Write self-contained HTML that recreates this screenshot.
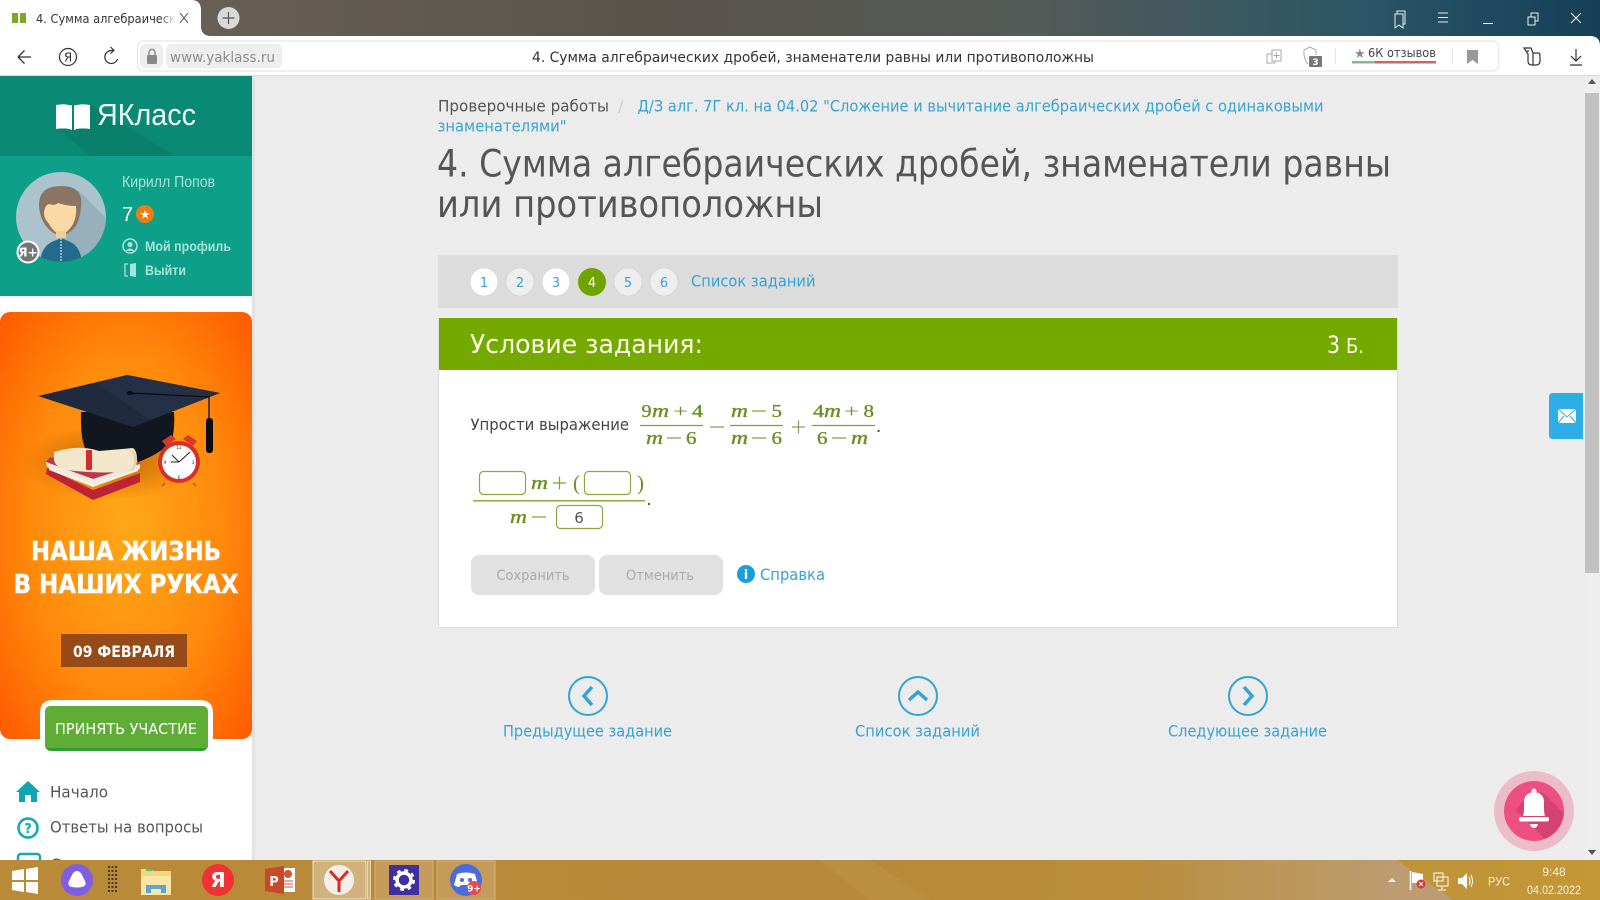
<!DOCTYPE html>
<html lang="ru"><head><meta charset="utf-8"><title>4. Сумма алгебраических дробей</title>
<style>
html,body{margin:0;padding:0;width:1600px;height:900px;overflow:hidden;background:#ececec}
svg{display:block;position:absolute;left:0;top:0}
text{font-family:"DejaVu Sans","Liberation Sans",sans-serif}
.r{font-family:"Liberation Sans","DejaVu Sans",sans-serif}
.mt{font-family:"Liberation Serif",serif;font-size:18px;fill:#6b8f22;stroke:#6b8f22;stroke-width:.35}
.mi{font-family:"Liberation Serif",serif;font-size:19px;font-style:italic;fill:#6b8f22;stroke:#6b8f22;stroke-width:.35}
.l{fill:#37a3d3;font-size:16px}
.n{fill:#3ba2d6;font-size:13px;text-anchor:middle}
</style></head><body>
<svg width="1600" height="900" viewBox="0 0 1600 900" xmlns="http://www.w3.org/2000/svg">
<defs>
<linearGradient id="top" x1="0" x2="1" y1="0" y2="0"><stop offset="0" stop-color="#6e645b"/><stop offset=".4" stop-color="#5a544c"/><stop offset=".65" stop-color="#545a58"/><stop offset=".85" stop-color="#2b5666"/><stop offset="1" stop-color="#153f58"/></linearGradient>
<radialGradient id="ban" gradientUnits="userSpaceOnUse" cx="126" cy="530" r="175" gradientTransform="translate(0 -400) scale(1 1.75)"><stop offset="0" stop-color="#ffa818"/><stop offset=".55" stop-color="#ff8a0c"/><stop offset="1" stop-color="#ff5a00"/></radialGradient>
<linearGradient id="tb" x1="0" x2="1" y1="0" y2="0"><stop offset="0" stop-color="#b98a38"/><stop offset=".55" stop-color="#b8893a"/><stop offset=".8" stop-color="#bb8f3c"/><stop offset="1" stop-color="#c49834"/></linearGradient>
<linearGradient id="wedge" gradientUnits="userSpaceOnUse" x1="1130" x2="1390" y1="0" y2="0"><stop offset="0" stop-color="#bc9c70" stop-opacity="0"/><stop offset="1" stop-color="#bc9c70"/></linearGradient>
<linearGradient id="fade" x1="0" x2="1" y1="0" y2="0"><stop offset="0" stop-color="#fff" stop-opacity="0"/><stop offset="1" stop-color="#fff"/></linearGradient>
<radialGradient id="hs" cx=".5" cy=".5" r=".5"><stop offset="0" stop-color="#a84c00" stop-opacity=".7"/><stop offset="1" stop-color="#a84c00" stop-opacity="0"/></radialGradient>
<clipPath id="av"><circle cx="61" cy="217" r="45"/></clipPath>
<clipPath id="bell"><circle cx="1534" cy="811" r="30"/></clipPath>
</defs>

<!-- main background -->
<rect width="1600" height="900" fill="#ececec"/>

<!-- browser chrome -->
<rect width="1600" height="38" fill="url(#top)"/>
<rect y="36" width="1600" height="40" fill="#fff"/>
<path d="M1590 36q10 0 10 10V36z" fill="#153f58"/>
<rect y="75" width="1600" height="1" fill="#dcdcdc"/>
<path d="M0 36V0h191q10 0 10 10v16q0 10 10 10z" fill="#fff"/>
<rect x="12" y="13" width="6" height="10" fill="#7aa928"/><rect x="20" y="13" width="6" height="10" fill="#7aa928"/>
<text x="36" y="23" font-size="12.500" fill="#333" textLength="140" lengthAdjust="spacingAndGlyphs">4. Сумма алгебраическ</text>
<rect x="160" y="10" width="16" height="16" fill="url(#fade)"/>
<path d="M180 13l8 10M188 13l-8 10" stroke="#444" stroke-width="1" fill="none"/>
<circle cx="228.500" cy="18" r="11" fill="#d9d9d9"/><path d="M228.500 12v12M222.500 18h12" stroke="#555" stroke-width="1.200"/>
<!-- window controls -->
<g stroke="#e8eef0" stroke-width="1" fill="none">
<path d="M1395 14h8v14l-4-3-4 3zM1397 14v-3h8v13h-2"/>
<path d="M1438 13h10M1438 17.500h10M1438 22h10"/>
<path d="M1483 23.500h10"/>
<path d="M1528 17h7v8h-7zM1531 17v-4h7v8h-3"/>
<path d="M1571 13l10 10M1581 13l-10 10" stroke-width="1.100"/>
</g>
<!-- toolbar -->
<path d="M31 57H18M18 57l6.500-6.500M18 57l6.500 6.500" stroke="#333" stroke-width="1.300" fill="none"/>
<circle cx="68" cy="57" r="8.500" fill="none" stroke="#333" stroke-width="1.200"/>
<text x="68" y="61.500" font-size="12" fill="#333" text-anchor="middle">Я</text>
<path d="M117.500 59a6.500 6.500 0 1 1-6-8.500h2M110.500 47l3.500 3.300-3.500 3.300" stroke="#333" stroke-width="1.200" fill="none"/>
<rect x="137.500" y="41" width="1361" height="30" rx="6" fill="#fff" stroke="#e6e6e6" stroke-width="1.200"/>
<rect x="140" y="44" width="23" height="24" rx="5" fill="#eeeeee"/>
<rect x="166" y="44" width="116" height="24" rx="5" fill="#eeeeee"/>
<rect x="147" y="55" width="10" height="9" rx="1" fill="#888"/><path d="M149 55v-2.500a3 3 0 0 1 6 0V55" stroke="#888" stroke-width="1.400" fill="none"/>
<text x="170" y="62" font-size="14.500" fill="#8d8d8d" textLength="105" lengthAdjust="spacingAndGlyphs">www.yaklass.ru</text>
<text x="532" y="62" font-size="14.500" fill="#333" textLength="562" lengthAdjust="spacingAndGlyphs">4. Сумма алгебраических дробей, знаменатели равны или противоположны</text>
<g stroke="#aaa" stroke-width="1" fill="none">
<path d="M1272 50h9v11h-9zM1272 54h-5v9h8v-2M1276.500 52.500v6M1273.500 55.500h6"/>
<path d="M1310 47l-6 3v5q1 6 4 9"/>
<path d="M1310 47l6 3v5"/>
<path d="M1335.500 48v16M1452.500 48v16" stroke="#e5e5e5"/>
</g>
<rect x="1309" y="56" width="13" height="11" rx="1" fill="#777"/><text x="1315.500" y="65" font-size="9" font-weight="bold" fill="#fff" text-anchor="middle">3</text>
<text x="1354" y="58" font-size="13" fill="#888">★</text>
<text x="1368" y="57" font-size="12.500" fill="#444" textLength="68" lengthAdjust="spacingAndGlyphs">6К отзывов</text>
<rect x="1352" y="61" width="23" height="2.500" fill="#84bd84"/><rect x="1375" y="61" width="61" height="2.500" fill="#d9605c"/>
<path d="M1467 50h11v14l-5.500-4-5.500 4z" fill="#999"/>
<path d="M1524 48h7l2 5h5q2 0 2 2v6q0 4-4 4h-4q-4 0-4-4v-7zM1533 53v12M1527 51h2" stroke="#333" stroke-width="1.200" fill="none"/>
<path d="M1576 49v12M1571 56l5 5 5-5M1570 65h12" stroke="#333" stroke-width="1.200" fill="none"/>

<!-- sidebar -->
<rect x="0" y="76" width="252" height="784" fill="#fff"/>
<rect x="252" y="76" width="3" height="784" fill="#e2e2e2"/>
<rect x="0" y="76" width="252" height="80" fill="#0a8a74"/>
<path d="M60 130L90 104 176 156H90z" fill="#087a67" opacity=".6"/>
<rect x="0" y="156" width="252" height="140" fill="#0d9f87"/>
<path d="M56 105q9-2 16 1v24q-7-3-16-1zM90 105q-9-2-16 1v24q7-3 16-1z" fill="#fff"/>
<path d="M56 105h15.500v23.500H56zM74.500 105H90v23.500H74.500z" fill="#fff"/>
<text class="r" x="97" y="125" font-size="31" fill="#fff" fill-opacity=".93" textLength="99" lengthAdjust="spacingAndGlyphs">ЯКласс</text>
<!-- avatar -->
<circle cx="61" cy="217" r="45" fill="#abc3cd"/>
<g clip-path="url(#av)">
<path d="M78 190L122 234 90 272 60 240z" fill="#97b0bb"/>
<path d="M40 266q0-20 14-25l7-3 7 3q14 5 14 25z" fill="#206b8e"/>
<path d="M61 238v26" stroke="#cfe0e6" stroke-width="1.200" stroke-dasharray="2 1"/>
<path d="M39 207q-1-21 22-21 23 0 20 21-1 12-5 19-7 9-15 9-8 0-15-9-6-8-7-19z" fill="#8a7564"/>
<path d="M44 214q0-8 5-10 6 2 9-1 9 3 18 3 1 10-3 18-6 10-12 10-6 0-12-10-5-6-5-10z" fill="#f9d9a4"/>
<rect x="56" y="231" width="10" height="7" fill="#f4cd94"/>
</g>
<circle cx="28" cy="252" r="10.500" fill="#757575" stroke="#fff" stroke-width="2"/>
<text x="28" y="256.500" font-size="12" font-weight="bold" fill="#fff" text-anchor="middle">Я+</text>
<text class="r" x="122" y="187" font-size="16" fill="#a6e4d9" textLength="93" lengthAdjust="spacingAndGlyphs">Кирилл Попов</text>
<text class="r" x="122" y="221" font-size="20" fill="#fff">7</text>
<circle cx="145" cy="214" r="9" fill="#f07d14"/><text x="145" y="218.500" font-size="12" fill="#fff" text-anchor="middle">★</text>
<circle cx="130" cy="246" r="7" fill="none" stroke="#a6e4d9" stroke-width="1.600"/><circle cx="130" cy="244.500" r="2.600" fill="#a6e4d9"/><path d="M125.500 251q4.500-5 9 0z" fill="#a6e4d9"/>
<text class="r" x="145" y="251" font-size="14" font-weight="bold" fill="#a6e4d9" textLength="86" lengthAdjust="spacingAndGlyphs">Мой профиль</text>
<path d="M128 264h-3v12h3" stroke="#a6e4d9" stroke-width="1.300" fill="none"/><path d="M130 264l6-1v14l-6-1z" fill="#a6e4d9"/>
<text class="r" x="145" y="275" font-size="14" font-weight="bold" fill="#a6e4d9" textLength="41" lengthAdjust="spacingAndGlyphs">Выйти</text>

<!-- banner -->
<rect x="0" y="312" width="252" height="427" rx="10" fill="url(#ban)"/>
<ellipse cx="110" cy="462" rx="90" ry="38" fill="url(#hs)"/>
<path d="M81 412q-1 34 8 42 20 12 41 11 30-10 42-24 3-14 2-29z" fill="#12161f"/>
<path d="M38 396L127 375 220 393 133 427z" fill="#1f2a3e"/>
<path d="M96 383L127 375 220 393 150 420z" fill="#252f46"/>
<path d="M130 393L209 397v22" stroke="#0a0e16" stroke-width="1.300" fill="none"/>
<ellipse cx="130" cy="393" rx="3.500" ry="2" fill="#0a0e16"/>
<rect x="206" y="418" width="7" height="35" rx="3" fill="#0c0d12"/>
<!-- books -->
<path d="M46 474L93 500 140 482V473L93 490 47 468z" fill="#bd2334"/>
<path d="M49 470L93 487 138 471V467L93 481 50 465z" fill="#f5f0ea"/>
<path d="M46 462L93 479 140 464 137 460 93 472 50 457z" fill="#b9384a"/>
<path d="M46 462L93 479V483L47 467z" fill="#f1e9e2"/>
<path d="M93 479L140 464V469L93 484z" fill="#f1e9e2"/>
<!-- scroll -->
<path d="M54 452q25-8 45-1l34-3q4 3 4 11 0 9-4 12-30 3-58 0-20-2-21-11 0-5 0-8z" fill="#f4e6ca"/>
<path d="M127 449q6 1 7 10t-5 12q6 0 8-10 0-11-10-12z" fill="#e3cfa6"/>
<rect x="86" y="450" width="6" height="20" fill="#d42a2e" rx="1"/>
<!-- clock -->
<path d="M162 441l9-6 5 4-10 7zM197 441l-9-6-5 4 10 7z" fill="#d6382c"/>
<circle cx="179" cy="462" r="21" fill="#d93025"/><circle cx="179" cy="462" r="17" fill="#fff"/>
<path d="M179 462l-7-7M179 462l11-10M179 462h-8" stroke="#222" stroke-width="1" fill="none"/>
<g fill="#333" font-size="4.500" text-anchor="middle"><text x="179" y="449">12</text><text x="179" y="479">6</text><text x="193" y="464">3</text><text x="165" y="464">9</text></g>
<path d="M165 483l-3 3M193 483l3 3" stroke="#c62" stroke-width="2"/>
<text x="126" y="560" font-size="26" font-weight="bold" fill="#fff" stroke="#fff" stroke-width=".4" text-anchor="middle" textLength="190" lengthAdjust="spacingAndGlyphs">НАША ЖИЗНЬ</text>
<text x="126" y="593" font-size="26" font-weight="bold" fill="#fff" stroke="#fff" stroke-width=".4" text-anchor="middle" textLength="225" lengthAdjust="spacingAndGlyphs">В НАШИХ РУКАХ</text>
<rect x="61" y="634" width="126" height="33" fill="#964a18"/>
<text x="124" y="657" font-size="16" font-weight="bold" fill="#fff" text-anchor="middle" textLength="102" lengthAdjust="spacingAndGlyphs">09 ФЕВРАЛЯ</text>
<path d="M40 739V713q0-13 13-13h147q13 0 13 13v26z" fill="#fff"/>
<rect x="40" y="738" width="173" height="17" fill="#fff"/>
<rect x="45" y="706" width="163" height="45" rx="6" fill="#2f9d33"/>
<path d="M45 712q0-6 6-6h151q6 0 6 6v35q0 1-3 1H48q-3 0-3-1z" fill="#5fad36"/>
<text x="55" y="734" font-size="15.500" fill="#fff" textLength="142" lengthAdjust="spacingAndGlyphs">ПРИНЯТЬ УЧАСТИЕ</text>

<!-- side menu -->
<path d="M28 781l12 11h-3v10h-6v-7h-6v7h-6v-10h-3z" fill="#0fa6b4"/>
<text x="50" y="797.500" font-size="16" fill="#555" textLength="58" lengthAdjust="spacingAndGlyphs">Начало</text>
<circle cx="28" cy="828" r="9.500" fill="#fff" stroke="#12a8b5" stroke-width="2.500"/>
<text x="28" y="833" font-size="13" font-weight="bold" fill="#12a8b5" text-anchor="middle">?</text>
<text x="50" y="832.500" font-size="16" fill="#555" textLength="153" lengthAdjust="spacingAndGlyphs">Ответы на вопросы</text>
<rect x="18" y="854" width="22" height="18" rx="3" fill="none" stroke="#12a8b5" stroke-width="2.500"/>
<text x="50" y="870" font-size="16" fill="#555">Сервисы</text>

<!-- breadcrumb + title -->
<text x="438" y="111.500" font-size="16" fill="#555" textLength="171" lengthAdjust="spacingAndGlyphs">Проверочные работы</text>
<text x="618" y="111.500" font-size="16" fill="#ccc">/</text>
<text class="l" x="637.500" y="111.500" textLength="686" lengthAdjust="spacingAndGlyphs">Д/З алг. 7Г кл. на 04.02 "Сложение и вычитание алгебраических дробей с одинаковыми</text>
<text class="l" x="437.500" y="131.500" textLength="129" lengthAdjust="spacingAndGlyphs">знаменателями"</text>
<text x="437" y="176.500" font-size="37" fill="#555" textLength="954" lengthAdjust="spacingAndGlyphs">4. Сумма алгебраических дробей, знаменатели равны</text>
<text x="437" y="217" font-size="37" fill="#555" textLength="386" lengthAdjust="spacingAndGlyphs">или противоположны</text>

<!-- pager -->
<rect x="438" y="255" width="960" height="53" fill="#dcdcdc"/>
<g stroke="#cfcfcf" stroke-width=".6">
<circle cx="484" cy="282" r="14" fill="#fff"/><circle cx="520" cy="282" r="14" fill="#eee"/><circle cx="556" cy="282" r="14" fill="#fff"/><circle cx="592" cy="282" r="14" fill="#6fa300" stroke="none"/><circle cx="628" cy="282" r="14" fill="#eee"/><circle cx="664" cy="282" r="14" fill="#eee"/>
</g>
<text class="n" x="484" y="287">1</text><text class="n" x="520" y="287">2</text><text class="n" x="556" y="287">3</text><text class="n" x="592" y="287" style="fill:#fff">4</text><text class="n" x="628" y="287">5</text><text class="n" x="664" y="287">6</text>
<text class="l" x="691" y="286.500" textLength="124.500" lengthAdjust="spacingAndGlyphs">Список заданий</text>

<!-- card -->
<rect x="438.500" y="318.500" width="959" height="309" fill="#fff" stroke="#dcdcdc"/>
<rect x="439" y="318" width="958" height="52" fill="#74aa00"/>
<text x="470" y="353" font-size="26" fill="#fbfde8" textLength="233" lengthAdjust="spacingAndGlyphs">Условие задания:</text>
<text x="1327" y="353" font-size="24" fill="#fbfde8" textLength="13" lengthAdjust="spacingAndGlyphs">3</text>
<text x="1346" y="353" font-size="20" fill="#fbfde8" textLength="18" lengthAdjust="spacingAndGlyphs">Б.</text>

<text x="470.500" y="430" font-size="16" fill="#444" textLength="158.500" lengthAdjust="spacingAndGlyphs">Упрости выражение</text>

<!-- math line 1 -->
<g stroke="#7da32a" stroke-width="1.200"><path d="M640 425.500h63M730 425.500h53M812 425.500h63"/></g>
<text class="mt" x="641.500" y="417" textLength="10" lengthAdjust="spacingAndGlyphs">9</text><text class="mi" x="652" y="417" textLength="17" lengthAdjust="spacingAndGlyphs">m</text><text class="mt" x="673" y="417" textLength="15" lengthAdjust="spacingAndGlyphs" style="stroke-width:0">+</text><text class="mt" x="692" y="417" textLength="11" lengthAdjust="spacingAndGlyphs">4</text>
<text class="mi" x="646" y="444" textLength="17" lengthAdjust="spacingAndGlyphs">m</text><path d="M667 438h14" stroke="#7da32a" stroke-width="1.200"/><text class="mt" x="686" y="444" textLength="10.500" lengthAdjust="spacingAndGlyphs">6</text>
<path d="M710 427h14M792 427h13M798.500 420.500v13" stroke="#8a9a60" stroke-width="1.200"/>
<text class="mi" x="731" y="417" textLength="17" lengthAdjust="spacingAndGlyphs">m</text><path d="M752 411h14" stroke="#7da32a" stroke-width="1.200"/><text class="mt" x="771.500" y="417" textLength="10.500" lengthAdjust="spacingAndGlyphs">5</text>
<text class="mi" x="731" y="444" textLength="17" lengthAdjust="spacingAndGlyphs">m</text><path d="M752 438h14" stroke="#7da32a" stroke-width="1.200"/><text class="mt" x="771.500" y="444" textLength="10.500" lengthAdjust="spacingAndGlyphs">6</text>
<text class="mt" x="813" y="417" textLength="11" lengthAdjust="spacingAndGlyphs">4</text><text class="mi" x="824" y="417" textLength="17" lengthAdjust="spacingAndGlyphs">m</text><text class="mt" x="844" y="417" textLength="15" lengthAdjust="spacingAndGlyphs" style="stroke-width:0">+</text><text class="mt" x="863.500" y="417" textLength="10.500" lengthAdjust="spacingAndGlyphs">8</text>
<text class="mt" x="817" y="444" textLength="10.500" lengthAdjust="spacingAndGlyphs">6</text><path d="M832 438h14" stroke="#7da32a" stroke-width="1.200"/><text class="mi" x="851" y="444" textLength="17" lengthAdjust="spacingAndGlyphs">m</text>
<rect x="877.500" y="430" width="2" height="2" fill="#555"/>

<!-- math line 2 -->
<g fill="#fff" stroke="#8aa83c" stroke-width="1.200">
<rect x="479.500" y="471.500" width="46" height="23" rx="4"/><rect x="584.500" y="471.500" width="46" height="23" rx="4"/><rect x="556.500" y="505.500" width="46" height="23" rx="4"/>
</g>
<text class="mi" x="531" y="489" textLength="17" lengthAdjust="spacingAndGlyphs">m</text>
<path d="M553 483h13M559.500 476.500v13" stroke="#7da32a" stroke-width="1.200"/>
<text class="mt" x="573" y="490" style="font-size:21px;stroke-width:0">(</text>
<text class="mt" x="637" y="490" style="font-size:21px;stroke-width:0">)</text>
<path d="M473 500.800h172" stroke="#7da32a" stroke-width="1.300"/>
<text class="mi" x="510" y="523" textLength="17" lengthAdjust="spacingAndGlyphs">m</text>
<path d="M532 517h14" stroke="#7da32a" stroke-width="1.200"/>
<text x="579" y="523" font-size="15" fill="#555" text-anchor="middle">6</text>
<rect x="648" y="503" width="2" height="2" fill="#555"/>

<!-- buttons -->
<rect x="471" y="555" width="124" height="40" rx="8" fill="#e1e1e1"/>
<rect x="599" y="555" width="124" height="40" rx="8" fill="#e1e1e1"/>
<text x="533" y="580" font-size="14.500" fill="#ababab" text-anchor="middle" textLength="73" lengthAdjust="spacingAndGlyphs">Сохранить</text>
<text x="660" y="580" font-size="14.500" fill="#ababab" text-anchor="middle" textLength="68" lengthAdjust="spacingAndGlyphs">Отменить</text>
<circle cx="746" cy="574" r="9" fill="#179fdc"/><text x="746" y="579" font-size="13" font-weight="bold" fill="#fff" text-anchor="middle">i</text>
<text class="l" x="760" y="580" textLength="65" lengthAdjust="spacingAndGlyphs">Справка</text>

<!-- nav -->
<g fill="none" stroke="#35a3d2">
<circle cx="588" cy="696" r="19" stroke-width="2"/><circle cx="918" cy="696" r="19" stroke-width="2"/><circle cx="1248" cy="696" r="19" stroke-width="2"/>
<path d="M592 687l-8 9 8 9M909 700l9-8 9 8M1244 687l8 9-8 9" stroke-width="3.500"/>
</g>
<text class="l" x="503" y="736.500" textLength="169" lengthAdjust="spacingAndGlyphs">Предыдущее задание</text>
<text class="l" x="855" y="736.500" textLength="125" lengthAdjust="spacingAndGlyphs">Список заданий</text>
<text class="l" x="1168" y="736.500" textLength="159" lengthAdjust="spacingAndGlyphs">Следующее задание</text>

<!-- scrollbar -->
<rect x="1585" y="76" width="15" height="784" fill="#eeeeee"/>
<rect x="1585" y="93" width="14" height="480" fill="#c1c1c1"/>
<path d="M1592 79l4 5h-8zM1592 855l4-5h-8z" fill="#555"/>

<!-- mail tab -->
<path d="M1553 393h30v46h-30q-4 0-4-4v-38q0-4 4-4z" fill="#2eaee6"/>
<rect x="1558" y="409" width="18" height="14" fill="#fff"/><path d="M1558 409l9 8 9-8M1558 423l6-7M1576 423l-6-7" stroke="#2eaee6" stroke-width="1" fill="none"/>

<!-- bell -->
<circle cx="1534" cy="811" r="40" fill="#edbccb"/>
<circle cx="1534" cy="811" r="30" fill="#ee4f83"/>
<g clip-path="url(#bell)"><path d="M1526 798l16-6 30 30-22 22-34-34z" fill="#c93e6e" opacity=".75"/></g>
<path d="M1523 816q1-3 1-8v-6q0-9 10-10 10 1 10 10v6q0 5 1 8z" fill="#fff"/><circle cx="1534" cy="791" r="2.500" fill="#fff"/>
<rect x="1519" y="817" width="30" height="4.500" rx="2" fill="#fff"/><path d="M1530 824h8q-1 4-4 4t-4-4z" fill="#fff"/>

<!-- taskbar -->
<rect y="860" width="1600" height="40" fill="url(#tb)"/>
<path d="M820 860h50l60 40h-60z" fill="#c89c4e" opacity=".3"/>
<path d="M1130 860H1397L1453 900H1130z" fill="url(#wedge)"/>
<g fill="#fff"><path d="M12 871l12-2v11H12zM26 869l12-2v13H26zM12 882h12v10l-12-2zM26 882h12v12l-12-2z"/></g>
<circle cx="77" cy="880" r="16" fill="#7e5fe2"/><path d="M77 871q3 0 5 4l3 6q2 5-3 6-5 1-10 0-5-1-3-6l3-6q2-4 5-4z" fill="#fff"/>
<path d="M109 866v28M112.500 866v28M116 866v28" stroke="#4b3a18" stroke-width="2" stroke-dasharray="2 2"/>
<path d="M141 869h10l2 2h18v24h-30z" fill="#f3d77f"/><rect x="146" y="869" width="6" height="2" fill="#3c8"/><path d="M141 876h30v19h-30z" fill="#f8e6a6"/><path d="M146 893v-8h20v8h-5v-4h-10v4z" fill="#5ea4d4"/>
<circle cx="218" cy="880" r="16" fill="#f13232"/><text x="218" y="887" font-size="20" font-weight="bold" fill="#fff" text-anchor="middle">Я</text>
<rect x="282" y="868" width="13" height="24" fill="#fff"/><path d="M284 881h9M284 884h9M284 887h9" stroke="#d35230"/>
<path d="M265 869l19-3v28l-19-3z" fill="#c8482a"/><text x="274" y="886" font-size="13" font-weight="bold" fill="#fff" text-anchor="middle">P</text>
<circle cx="288" cy="874" r="4" fill="#d35230"/>
<rect x="313" y="861" width="53" height="38" fill="#cfb27e" stroke="#f2e6cf"/>
<rect x="367.500" y="861" width="3" height="38" fill="#cfb27e" stroke="#f2e6cf" stroke-width=".8"/>
<circle cx="339" cy="880" r="15" fill="#f4efe9"/><path d="M330 871l9 10 9-10M339 881v11" stroke="#d52b2b" stroke-width="3" fill="none"/>
<rect x="375" y="861" width="58" height="38" fill="#c49b58" stroke="#d2b47c"/>
<rect x="389" y="865" width="30" height="30" fill="#3f2f9f"/>
<circle cx="404" cy="880" r="9" fill="none" stroke="#fff" stroke-width="4" stroke-dasharray="3.500 3.570"/><circle cx="404" cy="880" r="7" fill="none" stroke="#fff" stroke-width="3.500"/>
<rect x="437" y="861" width="58" height="38" fill="#c49b58" stroke="#d2b47c"/>
<circle cx="466" cy="880" r="16" fill="#4c6bdc"/>
<path d="M457 874q9-3 18 0l3 11q-3 2-5 2l-2-2h-10l-2 2q-2 0-5-2z" fill="#fff"/><circle cx="462" cy="880" r="2" fill="#4c6bdc"/><circle cx="470" cy="880" r="2" fill="#4c6bdc"/>
<circle cx="474" cy="888" r="7" fill="#e8474b"/><text x="474" y="891.500" font-size="9" font-weight="bold" fill="#fff" text-anchor="middle">9+</text>
<!-- tray -->
<path d="M1392 878l4 4h-8z" fill="#f5f1e6"/>
<path d="M1410.500 871v19" stroke="#fff" stroke-width="1.500"/><path d="M1412 872l11 2v9h-11z" fill="#fff"/><circle cx="1421" cy="884" r="4.500" fill="#d9383a"/><path d="M1419 882l4 4M1423 882l-4 4" stroke="#fff"/>
<path d="M1434 873h9v8h-9zM1437 877h11v9h-11zM1442 886v3M1438 890h8" stroke="#fff" fill="none"/>
<path d="M1458 878h4l5-5v16l-5-5h-4z" fill="#fff"/><path d="M1469 877q2 4 0 8M1471 875q3 6 0 12" stroke="#fff" fill="none"/>
<text class="r" x="1488" y="885.500" font-size="12" fill="#f4efe0" textLength="22" lengthAdjust="spacingAndGlyphs">РУС</text>
<text class="r" x="1554" y="876" font-size="12" fill="#f4efe0" text-anchor="middle">9:48</text>
<text class="r" x="1554" y="894" font-size="12" fill="#f4efe0" text-anchor="middle" textLength="54" lengthAdjust="spacingAndGlyphs">04.02.2022</text>
</svg>
</body></html>
